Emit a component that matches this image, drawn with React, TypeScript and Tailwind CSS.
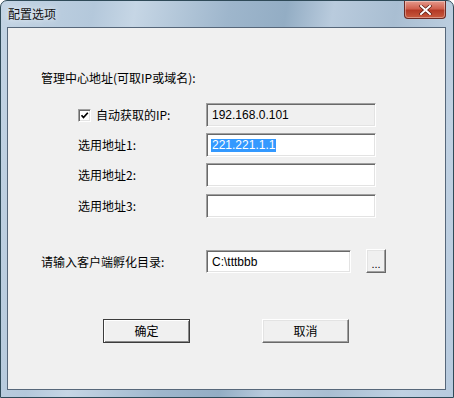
import React from 'react';

const sunken =
  "flex items-center border border-t-[#a0a0a0] border-l-[#a0a0a0] border-b-white border-r-white shadow-[inset_1px_1px_0_#696969,inset_-1px_-1px_0_#e3e3e3] font-['Liberation_Sans',Arial,sans-serif] text-[12px] leading-[14px] text-black";

const raised =
  "flex items-center justify-center border border-t-white border-l-white border-b-[#696969] border-r-[#696969] shadow-[inset_-1px_-1px_0_#a0a0a0,inset_1px_1px_0_#e3e3e3] bg-[#f0f0f0]";

function Field({ value, disabled, selected }: { value?: string; disabled?: boolean; selected?: boolean }) {
  return (
    <div className={`${sunken} h-[24px] w-[170px] pl-[4px] ${disabled ? 'bg-[#f0f0f0]' : 'bg-white'}`}>
      {selected ? (
        <span className="bg-[#3399ff] text-white px-[1px] leading-[13px]">{value}</span>
      ) : (
        <span className="pl-[1px]">{value}</span>
      )}
    </div>
  );
}

function Row({ label, children }: { label: React.ReactNode; children: React.ReactNode }) {
  return (
    <div className="flex items-center h-[24px]">
      <div className="w-[128px] ml-[70px] flex items-center">{label}</div>
      {children}
    </div>
  );
}

export default function App() {
  return (
    <div className="w-[454px] h-[398px] flex flex-col rounded-t-[7px] border border-[#2f4a58] bg-[linear-gradient(100deg,#c3d4e4_0%,#b4c8db_18%,#c6d6e5_26%,#9eb6cc_44%,#93adc4_55%,#b9cbdd_64%,#a9bed2_76%,#c0d1e2_90%,#b7cade_100%)] font-['Noto_Sans_CJK_SC','Noto_Sans_CJK_JP',sans-serif] text-[12px] leading-[16px] text-black overflow-hidden">
      {/* title bar */}
      <div className="h-[26px] flex justify-between items-start shrink-0">
        <span className="pl-[7px] pt-[5px] text-[12px] leading-[16px] text-[#111] [text-shadow:0_0_6px_#ffffff]">配置选项</span>
        <div className="mr-[7px] w-[42px] h-[18px] rounded-b-[4px] border border-t-0 border-[#6b2a24] bg-[linear-gradient(180deg,#e59a8c_0%,#d0604e_45%,#b43a26_55%,#c85a3e_100%)] flex items-center justify-center shadow-[inset_0_0_0_1px_rgba(255,255,255,0.35)]">
          <svg width="13" height="10" viewBox="0 0 13 10">
            <path d="M2 1 L11 9 M11 1 L2 9" stroke="#5a1a10" strokeWidth="3.4" strokeLinecap="square" />
            <path d="M2 1 L11 9 M11 1 L2 9" stroke="#ffffff" strokeWidth="2" strokeLinecap="square" />
          </svg>
        </div>
      </div>

      {/* client area */}
      <div className="ml-[6px] mr-[7px] mb-[7px] flex-1 border border-[#56677a] bg-[#f0f0f0] flex flex-col pt-[42px]">
        <div className="ml-[33px] h-[16px]">管理中心地址(可取IP或域名):</div>

        <div className="mt-[17px] flex flex-col gap-[6px]">
          <Row
            label={
              <div className="flex items-center gap-[5px]">
                <div className="w-[13px] h-[13px] bg-white border border-t-[#a0a0a0] border-l-[#a0a0a0] border-b-white border-r-white shadow-[inset_1px_1px_0_#696969,inset_-1px_-1px_0_#e3e3e3] flex items-center justify-center">
                  <svg width="9" height="9" viewBox="0 0 9 9">
                    <path d="M1.5 4.2 L3.5 6.5 L7.8 1.8" fill="none" stroke="#000" strokeWidth="1.7" />
                  </svg>
                </div>
                <span>自动获取的IP:</span>
              </div>
            }
          >
            <Field value="192.168.0.101" disabled />
          </Row>
          <Row label={<span>选用地址1:</span>}>
            <Field value="221.221.1.1" selected />
          </Row>
          <Row label={<span>选用地址2:</span>}>
            <Field />
          </Row>
          <div className="mt-[1px]">
            <Row label={<span>选用地址3:</span>}>
              <Field />
            </Row>
          </div>
        </div>

        <div className="mt-[31px] flex items-start h-[24px]">
          <div className="ml-[33px] w-[165px] pt-[5px]">请输入客户端孵化目录:</div>
          <div className={`${sunken} mt-[1px] h-[23px] w-[145px] pl-[5px] bg-white`}>C:\tttbbb</div>
          <div className={`${raised} ml-[15px] w-[20px] h-[24px] items-end pb-[3px] font-['Liberation_Sans',Arial,sans-serif] text-[11px] leading-[10px]`}>...</div>
        </div>

        <div className="mt-[46px] flex">
          <div className="ml-[95px] w-[87px] h-[24px] border border-[#3c3c3c] bg-[#f0f0f0] flex items-center justify-center shadow-[inset_1px_1px_0_#ffffff,inset_-1px_-1px_0_#8a8a8a]">
            确定
          </div>
          <div className={`${raised} ml-[72px] w-[87px] h-[24px]`}>取消</div>
        </div>
      </div>
    </div>
  );
}
